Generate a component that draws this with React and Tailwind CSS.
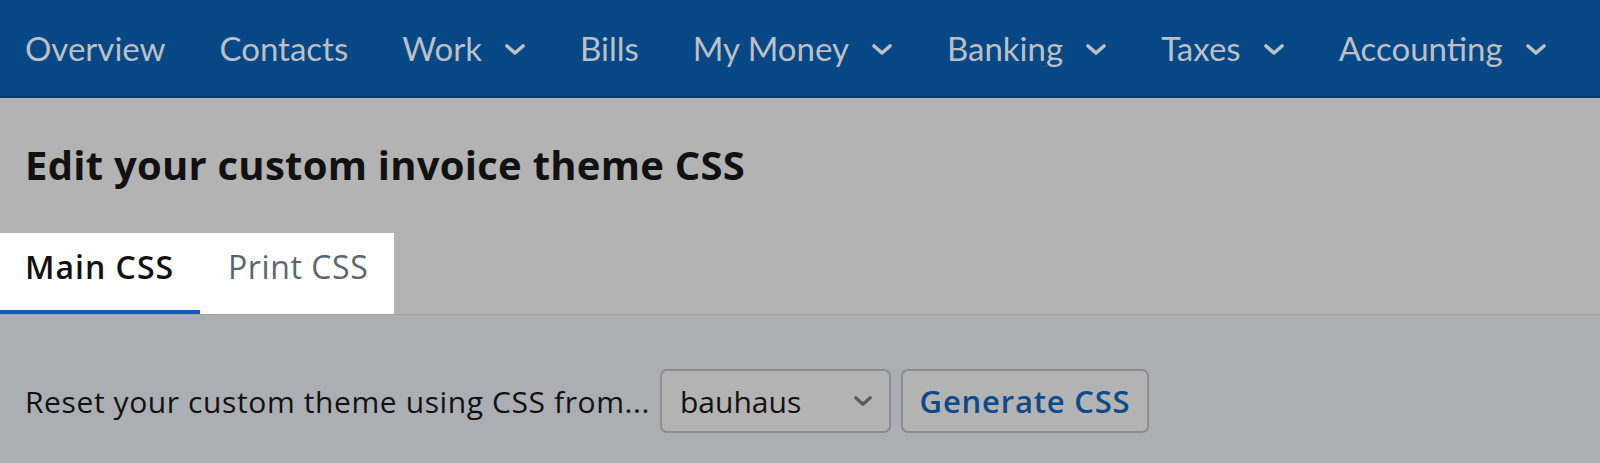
import React from 'react';

const navItems = [
  { label: 'Overview' },
  { label: 'Contacts' },
  { label: 'Work', menu: true },
  { label: 'Bills' },
  { label: 'My Money', menu: true },
  { label: 'Banking', menu: true },
  { label: 'Taxes', menu: true },
  { label: 'Accounting', menu: true },
];

const Chevron = ({ className = '' }) => (
  <svg viewBox="0 0 22 13" className={className} fill="none">
    <path d="M3 3l8 7 8-7" stroke="currentColor" strokeWidth="3.6" strokeLinecap="round" strokeLinejoin="round" />
  </svg>
);

const TopNav = () => (
  <nav className="h-[98px] bg-[#064785] border-b-2 border-[#043a6d] flex items-center pl-[25px] gap-[54px] font-['Lato',sans-serif]">
    {navItems.map((item) => (
      <div key={item.label} className="flex items-center gap-[22px] text-[33px] text-[#bcbfc3] leading-none">
        <span>{item.label}</span>
        {item.menu && <Chevron className="w-[22px] h-[13px] mt-[2px]" />}
      </div>
    ))}
  </nav>
);

export default function App() {
  return (
    <div className="w-[1600px] h-[463px] overflow-hidden bg-[#abaeb3] font-['Open_Sans',sans-serif]">
      <TopNav />
      <header className="bg-[#b3b3b3] border-b border-[#9f9f9f] h-[217px] flex flex-col">
        <h1 className="pl-[25px] pt-[47px] text-[40px] tracking-[0.25px] font-bold text-[#111] leading-none h-[135px]">
          Edit your custom invoice theme CSS
        </h1>
        <div className="flex w-[394px] h-[81px] bg-white">
          <button className="w-[200px] pl-[25px] pb-[10px] text-left text-[32px] tracking-[1px] font-semibold text-[#111] border-b-4 border-[#0b5cbf] leading-none">
            Main CSS
          </button>
          <button className="pl-[28px] pb-[10px] text-left text-[32px] tracking-[0.6px] text-[#5a6670] border-b-4 border-transparent leading-none">
            Print CSS
          </button>
        </div>
      </header>
      <section className="flex items-center pl-[25px] pt-[54px] gap-[10px]">
        <span className="text-[30px] tracking-[0.6px] text-[#111]">Reset your custom theme using CSS from...</span>
        <div className="w-[231px] h-[64px] rounded-[7px] border-2 border-[#8b8d90] bg-[#b3b3b3] flex items-center justify-between pl-[18px] pr-[16px]">
          <span className="text-[30px] text-[#111]">bauhaus</span>
          <Chevron className="w-[20px] h-[12px] text-[#555d66]" />
        </div>
        <button className="w-[248px] h-[64px] rounded-[7px] border-2 border-[#8b8d90] bg-[#b3b3b3] text-[31px] tracking-[0.8px] font-semibold text-[#0b4b8c]">
          Generate CSS
        </button>
      </section>
    </div>
  );
}
